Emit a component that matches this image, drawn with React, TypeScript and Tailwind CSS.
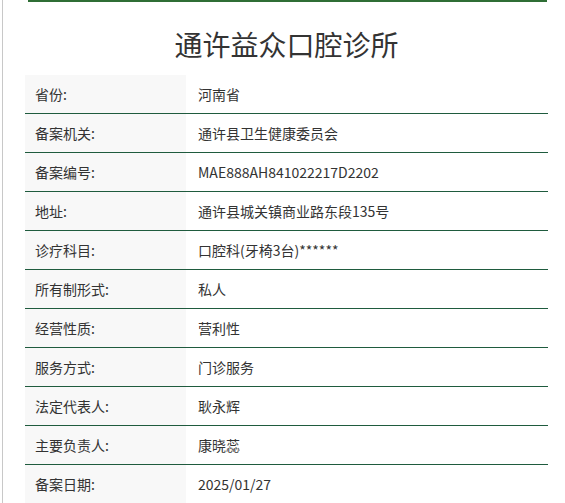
const rows: [string, string][] = [
  ["省份:", "河南省"],
  ["备案机关:", "通许县卫生健康委员会"],
  ["备案编号:", "MAE888AH841022217D2202"],
  ["地址:", "通许县城关镇商业路东段135号"],
  ["诊疗科目:", "口腔科(牙椅3台)******"],
  ["所有制形式:", "私人"],
  ["经营性质:", "营利性"],
  ["服务方式:", "门诊服务"],
  ["法定代表人:", "耿永辉"],
  ["主要负责人:", "康晓蕊"],
  ["备案日期:", "2025/01/27"],
];

export default function App() {
  return (
    <div
      className="h-[503px] overflow-hidden bg-white text-[#333]"
      style={{ fontFamily: '"Noto Sans CJK SC", "Noto Sans", sans-serif' }}
    >
      <div className="flex h-full border-l border-[#c8c8c8] ml-[2px]">
        <div className="ml-[22px] w-[523px]">
          <div className="ml-[3px] mr-[1px] h-[2px] bg-[#2f6e35]" />
          <h1 className="mt-[22px] h-[51px] text-center text-[28px] leading-[40px] text-[#333]">
            通许益众口腔诊所
          </h1>
          <div>
            {rows.map(([label, value], i) => (
              <div
                key={label}
                className={
                  i < rows.length - 1
                    ? "flex h-[39px] border-b border-[#1f5b3e]"
                    : "flex h-[39px]"
                }
              >
                <div className="flex w-[161px] items-center bg-[#f8f8f8] pl-[10px] text-[14px]">
                  {label}
                </div>
                <div className="flex items-center pl-[12px] text-[14px]">
                  {value}
                </div>
              </div>
            ))}
          </div>
        </div>
      </div>
    </div>
  );
}
